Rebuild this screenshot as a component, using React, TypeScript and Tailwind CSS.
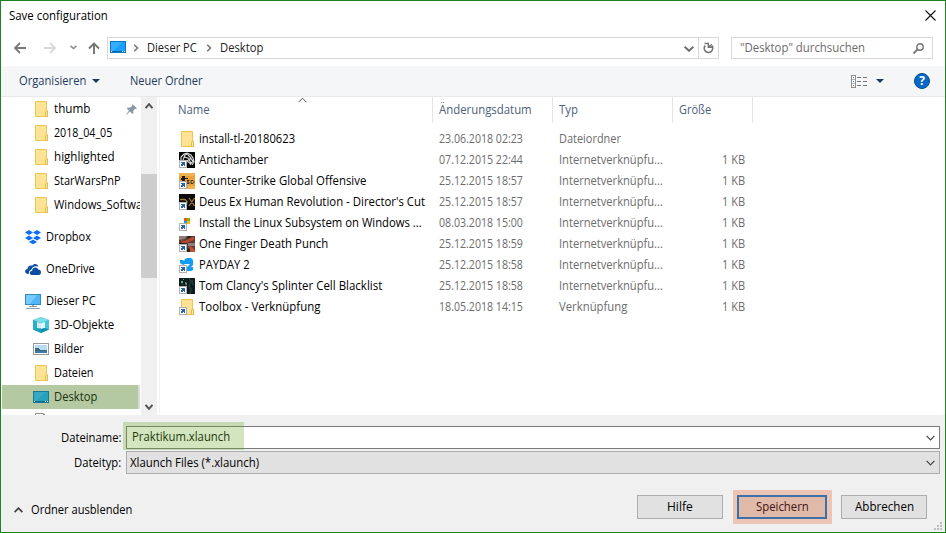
import { useLayoutEffect, useRef, useState } from 'react';
import type { ReactNode } from 'react';

/** Single-line label condensed horizontally so that it occupies exactly `w` pixels. */
function Label({ w, children, className = '' }: { w: number; children: string; className?: string }) {
  const ref = useRef<HTMLSpanElement>(null);
  const [scale, setScale] = useState(1);
  useLayoutEffect(() => {
    if (ref.current) setScale(w / ref.current.offsetWidth);
  }, [w]);
  return (
    <span className={`block shrink-0 whitespace-pre ${className}`} style={{ width: w }}>
      <span ref={ref} className="inline-block origin-left" style={{ transform: `scaleX(${scale})` }}>
        {children}
      </span>
    </span>
  );
}

function Svg({ w = 16, h = 16, crisp = false, children }: { w?: number; h?: number; crisp?: boolean; children: ReactNode }) {
  return (
    <svg className="block shrink-0" width={w} height={h} viewBox={`0 0 ${w} ${h}`} fill="none" shapeRendering={crisp ? 'crispEdges' : 'auto'}>
      {children}
    </svg>
  );
}

function FolderIcon() {
  return (
    <Svg>
      <path d="M2.500 .5h11v9.500h1v5.500h-12z" fill="#ffe394" stroke="#ecc552" />
      <path d="M12.500 15.500v-4.500l1-1h1v5.500z" fill="#ffe9a8" stroke="#e5bb48" />
    </Svg>
  );
}

function DesktopIcon({ dim = false }: { dim?: boolean }) {
  return (
    <Svg crisp>
      <rect x=".5" y="2.500" width="15" height="11" fill={dim ? '#28a1bd' : '#1a9fff'} stroke={dim ? '#17799a' : '#0a78c2'} />
      <path d="M1 3h11L4 12H1z" fill={dim ? '#35a9c1' : '#35adff'} />
      <path d="M1 12.500h14" stroke={dim ? '#126d8b' : '#0866aa'} />
      <path d="M1 12.500h1M12 12.500h1M14 12.500h1" stroke="#e8f6ff" />
    </Svg>
  );
}

function Chevron({ dir, color = '#505050', w = 9, sw = 1.6 }: { dir: 'up' | 'down' | 'right'; color?: string; w?: number; sw?: number }) {
  if (dir === 'right')
    return (
      <Svg w={6} h={8}>
        <path d="M1.200 .8L4.500 4 1.200 7.200" stroke={color} strokeWidth={sw} />
      </Svg>
    );
  return (
    <Svg w={w} h={6}>
      <path d={dir === 'up' ? `M.6 5.200L${w / 2} 1.200 ${w - 0.6} 5.200` : `M.6 .8L${w / 2} 4.800 ${w - 0.6} .8`} stroke={color} strokeWidth={sw} />
    </Svg>
  );
}

function DropboxIcon() {
  return (
    <Svg>
      <path d="M4 1l4 2.500-4 2.500-4-2.500zM12 1l4 2.500-4 2.500-4-2.500zM4 6.500L8 9l-4 2.500L0 9zM12 6.500L16 9l-4 2.500L8 9zM8 10.500l4 2.500-4 2.300L4 13z" fill="#0d6efd" />
    </Svg>
  );
}

function OneDriveIcon() {
  return (
    <Svg>
      <path d="M1.200 12.500C-.8 11 .2 8.200 2.500 8c0-2.800 2.600-4.300 4.700-3.300C9 2.200 12.600 2.600 13.400 5.600 9.600 4.300 7 5.800 6.300 8.800 4.300 9.200 3.700 11 4.200 12.800H2z" fill="#0b4ea2" />
      <path d="M6.600 14c-2.500-.3-2.200-4 .5-4.200.3-3.800 5.200-4.400 6.100-1.200 3.200-.2 3.900 4.400 1 5.400z" fill="#0b4ea2" />
    </Svg>
  );
}

function PcIcon() {
  return (
    <Svg>
      <rect x=".5" y="1.500" width="15" height="10" fill="#4fb7f7" stroke="#3589bd" />
      <path d="M1 2h11L5 11H1z" fill="#79cbff" />
      <path d="M7 12h2v1.500H7z" fill="#8da3b3" />
      <path d="M4 13.500h8M1 15.500h14" stroke="#8da3b3" />
    </Svg>
  );
}

function CubeIcon() {
  return (
    <Svg>
      <path d="M0 3l8-3 8 3v9.500L8 16l-8-3.500z" fill="#35bcd4" />
      <path d="M0 3l8-3 8 3-8 3z" fill="#7fdbe8" />
      <path d="M0 3l4 1.500v6.500L0 12.500z" fill="#2fadc6" />
      <path d="M4 5l4 1.200V11l-4 1z" fill="#c9eef5" />
      <path d="M8 6.200L12 5v6l-4 1z" fill="#e2f8fb" />
      <path d="M12 4.500L16 3v9.500L12 11z" fill="#3fc6dc" />
      <path d="M0 12.500L4 11l4 1v4z" fill="#1aa1bc" />
      <path d="M8 12l4-1 4 1.500L8 16z" fill="#0e8eaa" />
    </Svg>
  );
}

function PictureIcon() {
  return (
    <Svg crisp>
      <rect x=".5" y="2.500" width="15" height="11" fill="#fff" stroke="#9a9a9a" />
      <rect x="2" y="4" width="12" height="8" fill="#b9dcf5" />
      <path d="M2 7h3l3 2h6v1H2z" fill="#3c6b74" />
      <path d="M2 10h12v2H2z" fill="#3e79ac" />
    </Svg>
  );
}

function DocumentIcon() {
  return (
    <Svg>
      <path d="M2.500 15.500V.5h8l3 3v12z" fill="#fff" stroke="#8f8f8f" />
      <path d="M10.500 .5v3h3M5 2.500h4" stroke="#8f8f8f" />
    </Svg>
  );
}

/** Blue arrow badge in the lower left corner of every shortcut. */
function ShortcutBadge() {
  return (
    <g shapeRendering="crispEdges">
      <rect x=".5" y="8.500" width="7" height="7" fill="#fff" stroke="#b0b0b0" />
      <path d="M2 10h4v4H5v-1H4v1H2v-2h1v-1H2z" fill="#2563ad" />
    </g>
  );
}

function GameIcon({ kind }: { kind: string }) {
  const art: Record<string, ReactNode> = {
    antichamber: (
      <>
        <path d="M0 0h16v16H0z" fill="#050505" />
        <path d="M2 8V5l3-3 3-1 4 2 2 3 1 4-2 3M4 8l2-5 3-1M5 5l4 1 3 5M9 3l3 3-4 3M11 6l3 3-3 4M8 9l4 3" stroke="#dcdcdc" strokeWidth="1.100" />
      </>
    ),
    csgo: (
      <>
        <path d="M0 0h16v16H0z" fill="#e9a33a" />
        <path d="M0 0h16v3H0zM9 13h7v3H9z" fill="#efb352" />
        <path d="M3 3h3v2h3v1H6v3H3V7H2V5h1z" fill="#1c160c" />
        <path d="M10.500 7.500H8v1.500h2v1.500H8M12 7.500h2l1 1v1l-1 1h-2z" stroke="#463015" />
      </>
    ),
    deus: (
      <>
        <path d="M0 0h16v16H0z" fill="#0b0906" />
        <path d="M1 5.500h5l2 2v2M10 4l5.500 8M15.500 4L10 12" stroke="#a07a35" strokeWidth="1.300" />
      </>
    ),
    linux: (
      <g shapeRendering="crispEdges">
        <path d="M5 3h3v3H5z" fill="#f25022" />
        <path d="M8 3h3v3H8z" fill="#7fba00" />
        <path d="M5 6h3v3H5z" fill="#00a4ef" />
        <path d="M8 6h3v3H8z" fill="#ffb900" />
      </g>
    ),
    finger: (
      <>
        <path d="M0 0h16v16H0z" fill="#5c3b34" />
        <path d="M0 0h8l-2 3-6 1zM9 7h7v3H9z" fill="#8d8078" />
        <path d="M2 4l4 1 3-2 5-2 1 3-5 2-3 2-4-1z" fill="#b5482c" />
        <path d="M10 10l3 1 3 3v2h-5zM11 3l4-2v3z" fill="#c0502f" />
        <path d="M8 0h5L9 3zM0 7h7l2 2H0zM8 12l3 1v3H8z" fill="#30231f" />
      </>
    ),
    payday: <path d="M1 3h3l1 1 1-2 2-1h4l2 2v5l-2 2h2v3l-2 1H8v-4l3-3H6L4 8 1 6z" fill="#139cf6" />,
    splinter: (
      <>
        <path d="M0 0h16v16H0z" fill="#101b1e" />
        <path d="M10 0l2 4-2 4 2 3-1 5M13 2l1 5M2 5l3 2" stroke="#23403f" strokeWidth="1.300" />
        <path d="M2 3h2v2H2zM4 1h1v1H4z" fill="#58b878" />
        <path d="M6 4l2 1-1 3z" fill="#a6b9b4" />
      </>
    ),
    folder: (
      <>
        <path d="M2.500 .5h11v9.500h1v5.500h-12z" fill="#ffe394" stroke="#ecc552" />
        <path d="M12.500 15.500v-4.500l1-1h1v5.500z" fill="#ffe9a8" stroke="#e5bb48" />
      </>
    ),
  };
  return (
    <Svg>
      {art[kind]}
      <ShortcutBadge />
    </Svg>
  );
}

type FileEntry = { name: string; w: number; icon: string; date: string; type: string; tw: number; size?: string };

const LINK = 'Internetverknüpfu...';
const files: FileEntry[] = [
  { name: 'install-tl-20180623', w: 96, icon: '', date: '23.06.2018 02:23', type: 'Dateiordner', tw: 62 },
  { name: 'Antichamber', w: 69, icon: 'antichamber', date: '07.12.2015 22:44', type: LINK, tw: 104, size: '1 KB' },
  { name: 'Counter-Strike Global Offensive', w: 167, icon: 'csgo', date: '25.12.2015 18:57', type: LINK, tw: 104, size: '1 KB' },
  { name: "Deus Ex Human Revolution - Director's Cut", w: 226, icon: 'deus', date: '25.12.2015 18:57', type: LINK, tw: 104, size: '1 KB' },
  { name: 'Install the Linux Subsystem on Windows ...', w: 223, icon: 'linux', date: '08.03.2018 15:00', type: LINK, tw: 104, size: '1 KB' },
  { name: 'One Finger Death Punch', w: 129, icon: 'finger', date: '25.12.2015 18:59', type: LINK, tw: 104, size: '1 KB' },
  { name: 'PAYDAY 2', w: 51, icon: 'payday', date: '25.12.2015 18:58', type: LINK, tw: 104, size: '1 KB' },
  { name: "Tom Clancy's Splinter Cell Blacklist", w: 183, icon: 'splinter', date: '25.12.2015 18:58', type: LINK, tw: 104, size: '1 KB' },
  { name: 'Toolbox - Verknüpfung', w: 121, icon: 'folder', date: '18.05.2018 14:15', type: 'Verknüpfung', tw: 68, size: '1 KB' },
];

type TreeRowProps = { icon: ReactNode; text?: string; w?: number; root?: boolean; pinned?: boolean; className?: string };

function TreeRow({ icon, text, w = 0, root = false, pinned = false, className = '' }: TreeRowProps) {
  return (
    <div className={`mr-px flex h-6 shrink-0 items-center overflow-hidden ${root ? 'pl-6' : 'pl-8'} ${className}`}>
      {icon}
      {text && <Label w={w} className="ml-[5px]">{text}</Label>}
      {pinned && (
        <span className="ml-9">
          <Svg w={11} h={11}>
            <path d="M6.500 0L11 4.500 9.800 5 9 4.800 7.200 7l.2 2-1 1L4 7.500.5 10.700 0 10.500 3 6.700.8 4.500l1-1 2.200.3L6.200 2V1z" fill="#8b98a3" />
          </Svg>
        </span>
      )}
    </div>
  );
}

function Sidebar() {
  return (
    <div className="flex w-[140px] flex-col overflow-hidden">
      <TreeRow icon={<FolderIcon />} text="thumb" w={36} pinned />
      <TreeRow icon={<FolderIcon />} text="2018_04_05" w={58} />
      <TreeRow icon={<FolderIcon />} text="highlighted" w={61} />
      <TreeRow icon={<FolderIcon />} text="StarWarsPnP" w={67} />
      <TreeRow icon={<FolderIcon />} text="Windows_Software" w={99} />
      <TreeRow root icon={<DropboxIcon />} text="Dropbox" w={45} className="mt-2" />
      <TreeRow root icon={<OneDriveIcon />} text="OneDrive" w={49} className="mt-2" />
      <TreeRow root icon={<PcIcon />} text="Dieser PC" w={50} className="mt-2" />
      <TreeRow icon={<CubeIcon />} text="3D-Objekte" w={60} />
      <TreeRow icon={<PictureIcon />} text="Bilder" w={30} />
      <TreeRow icon={<FolderIcon />} text="Dateien" w={40} />
      <TreeRow icon={<DesktopIcon dim />} text="Desktop" w={43} className="ml-px border-r-2 border-[#d9d9d9] bg-[#b4c9a1] !pl-[31px] text-[#1c3010]" />
      <TreeRow icon={<DocumentIcon />} />
    </div>
  );
}

function FileList() {
  return (
    <div className="flex min-w-0 flex-1 flex-col">
      <div className="flex h-[26px] text-[#4c607a]">
        <div className="relative flex w-[273px] items-center border-r border-[#e5e5e5] pl-[18px]">
          <Label w={32}>Name</Label>
          <span className="absolute top-0 left-[138px]">
            <Chevron dir="up" sw={1} />
          </span>
        </div>
        <div className="flex w-[120px] items-center border-r border-[#e5e5e5] pl-1.5">
          <Label w={93}>Änderungsdatum</Label>
        </div>
        <div className="flex w-[120px] items-center border-r border-[#e5e5e5] pl-1.5">
          <Label w={19}>Typ</Label>
        </div>
        <div className="flex w-20 items-center border-r border-[#e5e5e5] pl-1.5">
          <Label w={32}>Größe</Label>
        </div>
      </div>
      <div className="mt-[5px] flex flex-col text-[#6d6d6d]">
        {files.map((f) => (
          <div key={f.name} className="flex h-[21px] items-center">
            <div className="flex w-[279px] items-center gap-1 pl-[19px] text-black">
              {f.icon ? <GameIcon kind={f.icon} /> : <FolderIcon />}
              <Label w={f.w}>{f.name}</Label>
            </div>
            <div className="w-[120px]">
              <Label w={84}>{f.date}</Label>
            </div>
            <div className="w-[163px]">
              <Label w={f.tw}>{f.type}</Label>
            </div>
            {f.size && <Label w={23}>{f.size}</Label>}
          </div>
        ))}
      </div>
    </div>
  );
}

export default function App() {
  return (
    <div className="flex h-[533px] w-[946px] cursor-default flex-col overflow-hidden border border-[#21831f] bg-white font-['Open_Sans','Noto_Sans',sans-serif] text-[12px] leading-4 text-black">
      <header className="flex h-[30px] shrink-0 items-center justify-between pr-[9px] pl-2">
        <Label w={99}>Save configuration</Label>
        <span className="-mt-px">
          <Svg w={11} h={11}>
            <path d="M.5 .5l10 10M10.500 .5l-10 10" stroke="#111" strokeWidth="1.100" />
          </Svg>
        </span>
      </header>

      <nav className="flex h-[35px] shrink-0 items-center pb-px pl-[13px] text-[#222]">
        <Svg w={12} h={12}>
          <path d="M12 6H1.500M6 1L1 6l5 5" stroke="#7a7a7a" strokeWidth="1.800" />
        </Svg>
        <span className="ml-[18px]">
          <Svg w={12} h={12}>
            <path d="M0 6h10.500M6 1l5 5-5 5" stroke="#d9d9d9" strokeWidth="1.800" />
          </Svg>
        </span>
        <span className="-mt-px ml-[14px]">
          <Svg w={7} h={5}>
            <path d="M.6 .8l2.900 2.700L6.400 .8" stroke="#8b8b8b" strokeWidth="1.600" />
          </Svg>
        </span>
        <span className="ml-[11px]">
          <Svg w={12} h={12}>
            <path d="M6 12V1.500M1 6.500l5-5 5 5" stroke="#757575" strokeWidth="1.900" />
          </Svg>
        </span>
        <div className="ml-[7px] flex h-[22px] w-[612px] items-center border border-[#d9d9d9] pl-[2px]">
          <span className="-mt-[3px]"><DesktopIcon /></span>
          <span className="ml-[7px]"><Chevron dir="right" color="#737373" sw={1.5} /></span>
          <Label w={50} className="ml-[8px]">Dieser PC</Label>
          <span className="ml-[9px]"><Chevron dir="right" color="#737373" sw={1.5} /></span>
          <Label w={43} className="ml-[8px]">Desktop</Label>
          <span className="mt-[2px] ml-auto"><Chevron dir="down" color="#6c6c6c" w={10} sw={1.900} /></span>
          <div className="ml-[4px] flex h-full w-[20px] items-center justify-center border-l border-[#d9d9d9]">
            <Svg w={11} h={12}>
              <path d="M2.200 3.600A4.200 4.200 0 1 0 8.700 3.600" stroke="#757575" strokeWidth="1.700" />
              <path d="M5.300 .8v4.400h5M5.800 4.700L9 2.500" stroke="#757575" strokeWidth="1.400" />
              <path d="M1.500 1.500h4.300" stroke="#757575" strokeWidth="1.400" />
            </Svg>
          </div>
        </div>
        <div className="ml-3 flex h-[22px] w-[202px] items-center justify-between border border-[#d9d9d9] pr-[8px] pl-[8px] text-[#6b6b6b]">
          <Label w={125}>"Desktop" durchsuchen</Label>
          <Svg w={11} h={11}>
            <circle cx="7" cy="4" r="3.200" stroke="#707070" strokeWidth="1.400" />
            <path d="M4.800 6.200L.5 10.500" stroke="#707070" strokeWidth="1.900" />
          </Svg>
        </div>
      </nav>

      <div className="flex h-[31px] shrink-0 items-center border-b border-[#e8e9eb] bg-[#f5f6f7] pl-[18px] text-[#1e395b]">
        <Label w={67}>Organisieren</Label>
        <span className="ml-[6px]"><Svg w={8} h={4}><path d="M0 0h8L4 4z" fill="#1e395b" /></Svg></span>
        <Label w={72} className="ml-[30px]">Neuer Ordner</Label>
        <span className="ml-auto">
          <Svg w={17} h={13} crisp>
            <rect x=".5" y=".5" width="4" height="12" fill="#fff" stroke="#8d8d8d" />
            <path d="M1 4.500h3M1 8.500h3" stroke="#b5b5b5" />
            <path d="M2 2.500h1" stroke="#777" />
            <path d="M2 6.500h1" stroke="#2383d0" />
            <path d="M2 10.500h1" stroke="#c33" />
            <path d="M6 2.500h4M12 2.500h4M6 6.500h4M12 6.500h4M6 10.500h4M12 10.500h4" stroke="#777" />
          </Svg>
        </span>
        <span className="ml-[8px]"><Svg w={8} h={4}><path d="M0 0h8L4 4z" fill="#1e395b" /></Svg></span>
        <div className="mr-[15px] ml-[30px] flex size-4 items-center justify-center rounded-full border border-[#074d91] bg-[#0868c8] text-[12px] font-bold text-white">?</div>
      </div>

      <main className="flex h-[318px] shrink-0 overflow-hidden">
        <Sidebar />
        <div className="flex w-4 shrink-0 flex-col items-center bg-[#f0f0f0]">
          <div className="flex h-[77px] pt-[6px] pr-px"><Chevron dir="up" color="#555" w={8} sw={2} /></div>
          <div className="h-[104px] w-full bg-[#cdcdcd]" />
          <div className="mt-auto mb-[5px] pr-px"><Chevron dir="down" color="#555" w={8} sw={2} /></div>
        </div>
        <div className="ml-[2px] w-px bg-[#f3f3f3]" />
        <FileList />
      </main>

      <footer className="relative flex flex-1 flex-col bg-[#f0f0f0]">
        <div className="mt-[11px] flex h-[23px] items-center">
          <div className="flex w-[120px] justify-end"><Label w={60}>Dateiname:</Label></div>
          <div className="relative ml-[5px] flex h-full w-[814px] items-center justify-between border border-[#7a7a7a] bg-white pr-[4px] pl-[5px]">
            <Label w={98} className="-mt-px">Praktikum.xlaunch</Label>
            <Chevron dir="down" sw={1.2} color="#444" />
            <div className="absolute -top-[5px] -left-[4px] h-7 w-[121px] bg-[#69a82b]/30" />
          </div>
        </div>
        <div className="mt-[2px] flex h-[23px] items-center">
          <div className="flex w-[120px] justify-end"><Label w={47}>Dateityp:</Label></div>
          <div className="ml-[5px] flex h-full w-[814px] items-center justify-between border border-[#adadad] bg-[#e1e1e1] pr-[4px] pl-[3px]">
            <Label w={129}>Xlaunch Files (*.xlaunch)</Label>
            <Chevron dir="down" sw={1.2} color="#444" />
          </div>
        </div>
        <div className="mt-4 flex h-[34px] items-center">
          <span className="mt-[5px] ml-[13px]"><Chevron dir="up" color="#444" sw={1.800} /></span>
          <Label w={101} className="mt-[6px] ml-[8px]">Ordner ausblenden</Label>
          <div className="ml-auto flex h-6 w-[86px] items-center justify-center border border-[#adadad] bg-[#e1e1e1]"><Label w={26}>Hilfe</Label></div>
          <div className="ml-[10px] flex h-[34px] w-[99px] items-center bg-[#ecc5b6] pl-1">
            <div className="flex h-6 w-[90px] items-center justify-center border-2 border-[#3b70a8] bg-[#e0b9a9] text-[#421414]"><Label w={53}>Speichern</Label></div>
          </div>
          <div className="mr-[18px] ml-[9px] flex h-6 w-[86px] items-center justify-center border border-[#adadad] bg-[#e1e1e1]"><Label w={59}>Abbrechen</Label></div>
        </div>
        <div className="absolute right-[3px] bottom-[2px]">
          <Svg w={8} h={8} crisp>
            <path d="M6 0h2v2H6zM3 3h2v2H3zM6 3h2v2H6zM0 6h2v2H0zM3 6h2v2H3zM6 6h2v2H6z" fill="#bdbdbd" />
          </Svg>
        </div>
      </footer>
    </div>
  );
}
